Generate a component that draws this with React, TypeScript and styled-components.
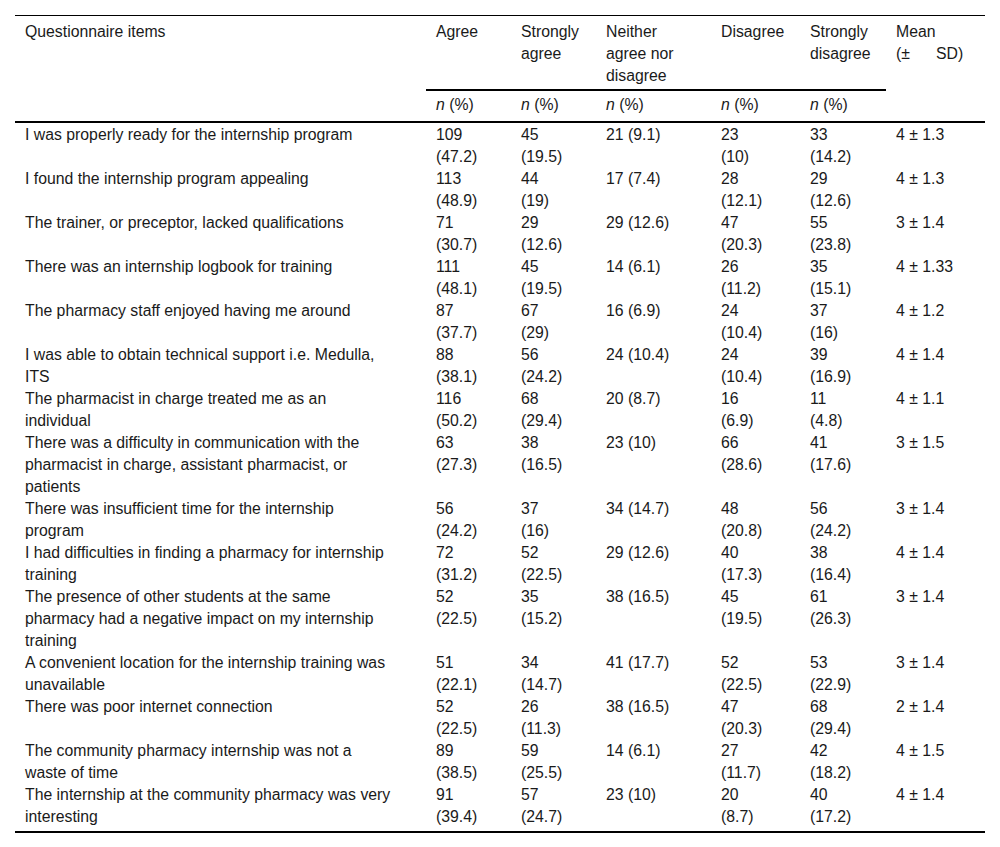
import React from 'react';
import styled, { createGlobalStyle } from 'styled-components';

const GlobalStyle = createGlobalStyle`
  body {
    margin: 0;
    background: #fff;
    font-family: "Liberation Sans", Arial, sans-serif;
    color: #1a1a1a;
  }
`;

const Page = styled.div`
  padding: 15px;
`;

const Table = styled.table`
  width: 970px;
  border-collapse: collapse;
  font-size: 15.8px;
  line-height: 22px;
  border-top: 1px solid #000;
  border-bottom: 2px solid #000;
`;

const Head = styled.th<{ $top?: boolean; $rule?: boolean }>`
  text-align: left;
  vertical-align: top;
  font-weight: normal;
  padding: ${p => (p.$top ? '5px 10px 2px' : '3px 10px 5px')};
  border-bottom: ${p => (p.$rule ? '2px solid #000' : 'none')};
  white-space: pre-line;
`;

const HeadRow = styled.tr<{ $last?: boolean }>`
  border-bottom: ${p => (p.$last ? '2px solid #000' : 'none')};
`;

const Row = styled.tr`
  &:first-child td {
    padding-top: 1px;
  }
  &:last-child td {
    padding-bottom: 3px;
  }
`;

const Cell = styled.td`
  vertical-align: top;
  padding: 0 10px;
  white-space: pre-line;
`;

const Em = styled.i``;

const Gap = styled.span`
  display: inline-block;
  width: 26px;
`;

type Item = { q: string; vals: string[]; mean: string };

const items: Item[] = [
  { q: 'I was properly ready for the internship program', vals: ['109\n(47.2)', '45\n(19.5)', '21 (9.1)', '23\n(10)', '33\n(14.2)'], mean: '4 ± 1.3' },
  { q: 'I found the internship program appealing', vals: ['113\n(48.9)', '44\n(19)', '17 (7.4)', '28\n(12.1)', '29\n(12.6)'], mean: '4 ± 1.3' },
  { q: 'The trainer, or preceptor, lacked qualifications', vals: ['71\n(30.7)', '29\n(12.6)', '29 (12.6)', '47\n(20.3)', '55\n(23.8)'], mean: '3 ± 1.4' },
  { q: 'There was an internship logbook for training', vals: ['111\n(48.1)', '45\n(19.5)', '14 (6.1)', '26\n(11.2)', '35\n(15.1)'], mean: '4 ± 1.33' },
  { q: 'The pharmacy staff enjoyed having me around', vals: ['87\n(37.7)', '67\n(29)', '16 (6.9)', '24\n(10.4)', '37\n(16)'], mean: '4 ± 1.2' },
  { q: 'I was able to obtain technical support i.e. Medulla,\nITS', vals: ['88\n(38.1)', '56\n(24.2)', '24 (10.4)', '24\n(10.4)', '39\n(16.9)'], mean: '4 ± 1.4' },
  { q: 'The pharmacist in charge treated me as an\nindividual', vals: ['116\n(50.2)', '68\n(29.4)', '20 (8.7)', '16\n(6.9)', '11\n(4.8)'], mean: '4 ± 1.1' },
  { q: 'There was a difficulty in communication with the\npharmacist in charge, assistant pharmacist, or\npatients', vals: ['63\n(27.3)', '38\n(16.5)', '23 (10)', '66\n(28.6)', '41\n(17.6)'], mean: '3 ± 1.5' },
  { q: 'There was insufficient time for the internship\nprogram', vals: ['56\n(24.2)', '37\n(16)', '34 (14.7)', '48\n(20.8)', '56\n(24.2)'], mean: '3 ± 1.4' },
  { q: 'I had difficulties in finding a pharmacy for internship\ntraining', vals: ['72\n(31.2)', '52\n(22.5)', '29 (12.6)', '40\n(17.3)', '38\n(16.4)'], mean: '4 ± 1.4' },
  { q: 'The presence of other students at the same\npharmacy had a negative impact on my internship\ntraining', vals: ['52\n(22.5)', '35\n(15.2)', '38 (16.5)', '45\n(19.5)', '61\n(26.3)'], mean: '3 ± 1.4' },
  { q: 'A convenient location for the internship training was\nunavailable', vals: ['51\n(22.1)', '34\n(14.7)', '41 (17.7)', '52\n(22.5)', '53\n(22.9)'], mean: '3 ± 1.4' },
  { q: 'There was poor internet connection', vals: ['52\n(22.5)', '26\n(11.3)', '38 (16.5)', '47\n(20.3)', '68\n(29.4)'], mean: '2 ± 1.4' },
  { q: 'The community pharmacy internship was not a\nwaste of time', vals: ['89\n(38.5)', '59\n(25.5)', '14 (6.1)', '27\n(11.7)', '42\n(18.2)'], mean: '4 ± 1.5' },
  { q: 'The internship at the community pharmacy was very\ninteresting', vals: ['91\n(39.4)', '57\n(24.7)', '23 (10)', '20\n(8.7)', '40\n(17.2)'], mean: '4 ± 1.4' },
];

const widths = [411, 85, 85, 115, 89, 86, 99];
const answers = ['Agree', 'Strongly\nagree', 'Neither\nagree nor\ndisagree', 'Disagree', 'Strongly\ndisagree'];

export default function App() {
  return (
    <Page>
      <GlobalStyle />
      <Table>
        <colgroup>
          {widths.map((w, i) => (
            <col key={i} style={{ width: w }} />
          ))}
        </colgroup>
        <thead>
          <HeadRow>
            <Head $top rowSpan={2}>Questionnaire items</Head>
            {answers.map(a => (
              <Head key={a} $top $rule>{a}</Head>
            ))}
            <Head $top rowSpan={2}>
              {'Mean\n(±'}
              <Gap />
              SD)
            </Head>
          </HeadRow>
          <HeadRow $last>
            {answers.map(a => (
              <Head key={a}>
                <Em>n</Em> (%)
              </Head>
            ))}
          </HeadRow>
        </thead>
        <tbody>
          {items.map(it => (
            <Row key={it.q}>
              <Cell>{it.q}</Cell>
              {it.vals.map((v, i) => (
                <Cell key={i}>{v}</Cell>
              ))}
              <Cell>{it.mean}</Cell>
            </Row>
          ))}
        </tbody>
      </Table>
    </Page>
  );
}
